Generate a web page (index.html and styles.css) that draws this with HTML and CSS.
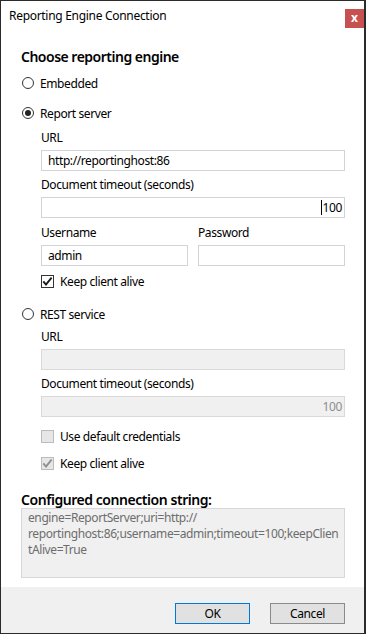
FILE: index.html
```html
<!DOCTYPE html>
<html lang="en">
<head>
<meta charset="utf-8">
<title>Reporting Engine Connection</title>
<link rel="stylesheet" href="styles.css">
</head>
<body>
<div class="window">
  <div class="titlebar">
    <span class="title">Reporting Engine Connection</span>
    <span class="close">x</span>
  </div>
  <div class="content">
    <h1 class="heading">Choose reporting engine</h1>

    <div class="option opt-embedded"><span class="radio"></span><span>Embedded</span></div>
    <div class="option opt-server"><span class="radio checked"></span><span>Report server</span></div>

    <div class="group">
      <div class="label lbl-first">URL</div>
      <div class="input"><span>http://reportinghost:86</span></div>
      <div class="label lbl-next">Document timeout (seconds)</div>
      <div class="input num"><span class="caret"></span><span>100</span></div>
      <div class="pair">
        <div class="col">
          <div class="label">Username</div>
          <div class="input"><span>admin</span></div>
        </div>
        <div class="col">
          <div class="label">Password</div>
          <div class="input"></div>
        </div>
      </div>
      <div class="check-row chk-server">
        <span class="checkbox">
          <svg width="13" height="13" viewBox="0 0 13 13"><path d="M2.3 6.4 L5 9.6 L10.6 2.6" fill="none" stroke="#1a1a1a" stroke-width="1.9"/></svg>
        </span>
        <span>Keep client alive</span>
      </div>
    </div>

    <div class="option opt-rest"><span class="radio"></span><span>REST service</span></div>

    <div class="group">
      <div class="label lbl-rest">URL</div>
      <div class="input disabled"></div>
      <div class="label lbl-next">Document timeout (seconds)</div>
      <div class="input disabled num"><span>100</span></div>
      <div class="check-row chk-default">
        <span class="checkbox disabled"></span>
        <span>Use default credentials</span>
      </div>
      <div class="check-row chk-alive">
        <span class="checkbox disabled">
          <svg width="13" height="13" viewBox="0 0 13 13"><path d="M2.3 6.4 L5 9.6 L10.6 2.6" fill="none" stroke="#8f8f8f" stroke-width="1.9"/></svg>
        </span>
        <span>Keep client alive</span>
      </div>
    </div>

    <h2 class="subheading">Configured connection string:</h2>
    <div class="connstr">
      <div class="line">engine=ReportServer;uri=http://</div>
      <div class="line">reportinghost:86;username=admin;timeout=100;keepClien</div>
      <div class="line">tAlive=True</div>
    </div>
  </div>
  <div class="footer">
    <button class="btn default">OK</button>
    <button class="btn">Cancel</button>
  </div>
</div>
</body>
</html>
```

FILE: styles.css
```css
* { box-sizing: border-box; }
html, body { margin: 0; padding: 0; }
body {
  width: 366px;
  height: 634px;
  font-family: "Noto Sans", "Open Sans", sans-serif;
  font-size: 12px;
  letter-spacing: -0.4px;
  color: #000;
  background: #fff;
}
.window {
  width: 366px;
  height: 634px;
  border: 1px solid #2b2b2b;
  border-right-width: 2px;
  display: flex;
  flex-direction: column;
  background: #fff;
}
.titlebar {
  height: 30px;
  flex: none;
  display: flex;
  justify-content: space-between;
  align-items: flex-start;
  padding-left: 8px;
}
.title { line-height: 30px; letter-spacing: -0.3px; }
.close {
  margin-top: 8px;
  width: 19px;
  height: 19px;
  background: #c75050;
  color: #fff;
  font-weight: bold;
  font-size: 12px;
  line-height: 17px;
  text-align: center;
  letter-spacing: 0;
}
.content {
  flex: 1;
  padding: 0 19px 0 20px;
  display: flex;
  flex-direction: column;
}
.heading {
  margin: 16px 0 0;
  font-size: 14px;
  font-weight: 600;
  line-height: 20px;
  letter-spacing: -0.5px;
}
.option {
  display: flex;
  align-items: center;
  height: 20px;
}
.opt-embedded { margin-top: 6px; }
.opt-server { margin-top: 10px; }
.opt-rest { margin-top: 16px; }
.radio {
  width: 12px;
  height: 12px;
  border: 1px solid #333;
  border-radius: 50%;
  margin: 0 6px 0 1px;
  display: flex;
  align-items: center;
  justify-content: center;
  background: #fff;
  flex: none;
}
.radio.checked::after {
  content: "";
  width: 6px;
  height: 6px;
  border-radius: 50%;
  background: #222;
}
.group {
  padding-left: 20px;
  display: flex;
  flex-direction: column;
}
.label { line-height: 16px; }
.lbl-first { margin-top: 7px; }
.lbl-next { margin-top: 6px; }
.lbl-rest { margin-top: 5px; }
.pair {
  margin-top: 7px;
  display: grid;
  grid-template-columns: 1fr 1fr;
  column-gap: 10px;
}
.input {
  margin-top: 4px;
  height: 21px;
  border: 1px solid #d3d3da;
  background: #fff;
  padding: 0 6px;
  display: flex;
  align-items: center;
}
.input.num { justify-content: flex-end; padding-right: 2px; }
.input.disabled {
  background: #f0f0f0;
  border-color: #d9d9d9;
  color: #8d8d8d;
}
.caret {
  display: inline-block;
  width: 1px;
  height: 15px;
  background: #000;
  margin-right: 1px;
}
.check-row {
  display: flex;
  align-items: center;
  height: 14px;
}
.chk-server { margin-top: 8px; }
.chk-default { margin-top: 12px; }
.chk-alive { margin-top: 13px; }
.checkbox {
  width: 13px;
  height: 13px;
  border: 1px solid #333;
  background: #fff;
  margin-right: 6px;
  flex: none;
  display: flex;
  align-items: center;
  justify-content: center;
}
.checkbox svg { display: block; flex: none; }
.checkbox.disabled {
  background: #e6e6e6;
  border-color: #bcbcbc;
}
.subheading {
  margin: 22px 0 0;
  font-size: 14px;
  font-weight: 600;
  line-height: 16px;
  letter-spacing: -0.45px;
}
.connstr {
  height: 70px;
  border: 1px solid #d6d6dc;
  background: #f0f0f0;
  color: #6d6d6d;
  padding: 1px 6px;
  line-height: 16px;
  overflow: hidden;
}
.line { white-space: nowrap; }
.footer {
  flex: none;
  height: 46px;
  background: #f0f0f0;
  display: flex;
  justify-content: flex-end;
  align-items: flex-start;
  gap: 20px;
  padding: 16px 19px 0 0;
}
.btn {
  width: 75px;
  height: 21px;
  border: 1px solid #8a8a8a;
  background: #e1e1e1;
  font-family: inherit;
  font-size: 12px;
  letter-spacing: inherit;
  color: #000;
  padding: 0;
  margin: 0;
}
.btn.default { border-color: #0078d7; }
```
